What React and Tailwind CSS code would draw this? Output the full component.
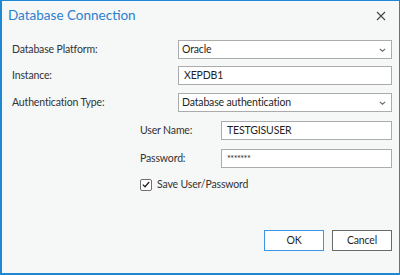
import React from "react";

const Chevron = () => (
  <svg width="7" height="4" viewBox="0 0 7 4" className="shrink-0">
    <polyline points="0.8,0.8 3.5,3.2 6.2,0.8" fill="none" stroke="#666" strokeWidth="1.1" />
  </svg>
);

const SelectBox = ({ value }) => (
  <div className="flex-1 h-[19px] bg-white border border-[#ababab] flex items-center justify-between pl-[3px] pr-[5px] text-[#1f1f1f]">
    <span>{value}</span>
    <Chevron />
  </div>
);

const TextBox = ({ value, className = "" }) => (
  <div className={"flex-1 h-[19px] bg-white border border-[#ababab] flex items-center pl-[5px] text-[#1f1f1f] " + className}>
    {value}
  </div>
);

export default function App() {
  return (
    <div className="w-[400px] h-[275px] bg-[#f6f7f7] border-t border-r border-l-2 border-b-2 border-[#1e88d2] flex flex-col font-['Lato','Noto_Sans',sans-serif] text-[10.5px] tracking-[-0.15px] text-[#333]">
      {/* title bar */}
      <div className="h-[29px] flex items-center justify-between pl-[6px] pr-[13px]">
        <span className="text-[13.5px] tracking-normal text-[#2b80cf]">Database Connection</span>
        <svg width="10" height="10" viewBox="0 0 10 10">
          <path d="M1 1 L9 9 M9 1 L1 9" stroke="#444" strokeWidth="1.1" />
        </svg>
      </div>

      <div className="flex flex-col pl-[10px] pr-[7px] mt-[10px]">
        <div className="flex items-center">
          <span className="w-[166px]">Database Platform:</span>
          <SelectBox value="Oracle" />
        </div>
        <div className="flex items-center mt-[7px]">
          <span className="w-[166px]">Instance:</span>
          <TextBox value="XEPDB1" className="pl-[4px]" />
        </div>
        <div className="flex items-center mt-[8px]">
          <span className="w-[166px]">Authentication Type:</span>
          <SelectBox value="Database authentication" />
        </div>

        <div className="pl-[128px] flex flex-col">
          <div className="flex items-center mt-[9px]">
            <span className="w-[81px]">User Name:</span>
            <TextBox value="TESTGISUSER" />
          </div>
          <div className="flex items-center mt-[9px]">
            <span className="w-[81px]">Password:</span>
            <TextBox value="*******" className="text-[9px] tracking-[-0.5px]" />
          </div>
          <div className="flex items-center mt-[9px]">
            <div className="w-[12px] h-[12px] bg-white border border-[#6f6f6f] rounded-[2px] flex items-center justify-center">
              <svg width="8" height="7" viewBox="0 0 8 7">
                <polyline points="0.8,3.6 3,5.8 7.2,1" fill="none" stroke="#222" strokeWidth="1.3" />
              </svg>
            </div>
            <span className="ml-[5px]">Save User/Password</span>
          </div>
        </div>
      </div>

      <div className="flex justify-end gap-[8px] pr-[7px] mt-auto mb-[22px]">
        <button className="w-[60px] h-[21px] bg-white border border-[#3c97e3] text-[#1f1f1f]">OK</button>
        <button className="w-[60px] h-[21px] bg-white border border-[#6a6a6a] text-[#1f1f1f]">Cancel</button>
      </div>
    </div>
  );
}
